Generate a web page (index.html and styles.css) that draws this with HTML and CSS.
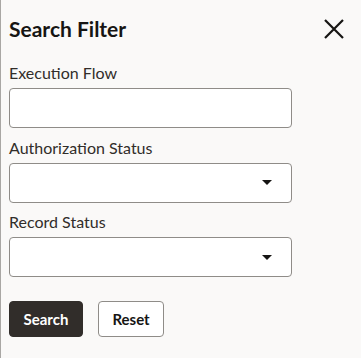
FILE: index.html
```html
<!DOCTYPE html>
<html lang="en">
<head>
    <meta charset="UTF-8">
    <meta name="viewport" content="width=device-width, initial-scale=1.0">
    <title>Search Filter</title>
    <link rel="stylesheet" href="styles.css">
</head>
<body>
    <div class="panel">
        <div class="panel-header">
            <h1>Search Filter</h1>
            <button class="close-btn" aria-label="Close">
                <svg width="22" height="22" viewBox="0 0 22 22">
                    <path d="M2 2 L20 20 M20 2 L2 20" stroke="#161513" stroke-width="2.2" fill="none"/>
                </svg>
            </button>
        </div>

        <form class="filter-form">
            <div class="field">
                <label for="executionFlow">Execution Flow</label>
                <input type="text" id="executionFlow">
            </div>
            <div class="field">
                <label>Authorization Status</label>
                <div class="select-box">
                    <span class="caret"></span>
                </div>
            </div>
            <div class="field">
                <label>Record Status</label>
                <div class="select-box">
                    <span class="caret"></span>
                </div>
            </div>
            <div class="actions">
                <button type="button" class="btn btn-primary">Search</button>
                <button type="button" class="btn btn-outline">Reset</button>
            </div>
        </form>
    </div>
</body>
</html>
```

FILE: styles.css
```css
body, html {
    margin: 0;
    padding: 0;
    height: 100%;
    width: 100%;
    background-color: #faf9f8;
    color: #161513;
    font-family: 'Lato', 'Noto Sans', sans-serif;
}

.panel {
    box-sizing: border-box;
    height: 100%;
    border-left: 1px solid #a9a7a4;
    padding: 0 0 0 8px;
}

.panel-header {
    display: flex;
    align-items: center;
    justify-content: space-between;
    height: 57px;
    padding-right: 14px;
}

.panel-header h1 {
    margin: 0;
    font-size: 21px;
    font-weight: 700;
    color: #161513;
}

.close-btn {
    display: flex;
    align-items: center;
    justify-content: center;
    width: 26px;
    height: 26px;
    padding: 0;
    border: none;
    background: none;
    cursor: pointer;
}

.filter-form {
    width: 283px;
    padding-top: 6px;
}

.field {
    display: flex;
    flex-direction: column;
    margin-bottom: 9.5px;
}

.field label {
    font-size: 16px;
    line-height: 20px;
    margin-bottom: 5px;
    color: #312d2a;
}

.field input,
.select-box {
    box-sizing: border-box;
    height: 40px;
    width: 100%;
    border: 1px solid #8f8c88;
    border-radius: 4px;
    background-color: #fff;
    margin: 0;
}

.select-box {
    display: flex;
    align-items: center;
    justify-content: flex-end;
    padding-right: 19px;
}

.caret {
    width: 0;
    height: 0;
    border-left: 5px solid transparent;
    border-right: 5px solid transparent;
    border-top: 5px solid #161513;
}

.actions {
    display: flex;
    gap: 15px;
    padding-top: 14px;
}

.btn {
    height: 36px;
    padding: 0 13.5px;
    border-radius: 4px;
    font-family: inherit;
    font-size: 15px;
    font-weight: 700;
    cursor: pointer;
}

.btn-primary {
    background-color: #312d2a;
    border: 1px solid #312d2a;
    color: #fff;
}

.btn-outline {
    background-color: #fff;
    border: 1px solid #8f8c88;
    color: #161513;
}
```
